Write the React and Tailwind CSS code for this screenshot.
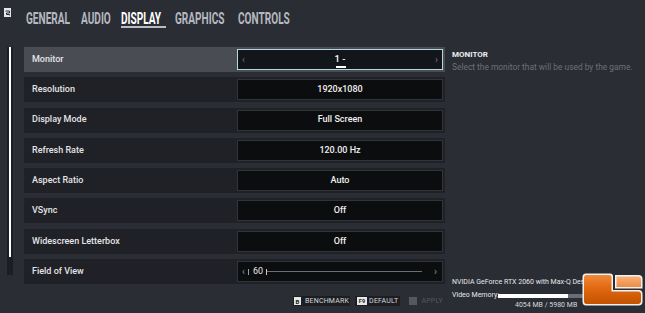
const TABS = [
  { label: 'GENERAL', w: 'w-[46px]' },
  { label: 'AUDIO', w: 'w-[31px]' },
  { label: 'DISPLAY', w: 'w-[45px]', active: true },
  { label: 'GRAPHICS', w: 'w-[54px]' },
  { label: 'CONTROLS', w: 'w-[55px]' },
]

const ROWS = [
  { label: 'Monitor', value: '1 -', active: true },
  { label: 'Resolution', value: '1920x1080' },
  { label: 'Display Mode', value: 'Full Screen' },
  { label: 'Refresh Rate', value: '120.00 Hz' },
  { label: 'Aspect Ratio', value: 'Auto' },
  { label: 'VSync', value: 'Off' },
  { label: 'Widescreen Letterbox', value: 'Off' },
  { label: 'Field of View', slider: 60 },
]

function Logo() {
  return (
    <svg width="61" height="33" viewBox="0 0 61 33" className="absolute left-[582px] top-[273px]">
      <defs>
        <linearGradient id="lr-dark" x1="0" y1="0" x2="0" y2="1">
          <stop offset="0" stopColor="#f08a3a" />
          <stop offset="0.45" stopColor="#e06810" />
          <stop offset="1" stopColor="#c45200" />
        </linearGradient>
        <linearGradient id="lr-light" x1="0" y1="0" x2="0" y2="1">
          <stop offset="0" stopColor="#f8b27a" />
          <stop offset="1" stopColor="#ee8c44" />
        </linearGradient>
      </defs>
      <path d="M4 0.5 H28 Q31 0.5 31 3.5 V17 H56.5 Q60.5 17 60.5 21 V28.5 Q60.5 32.5 56.5 32.5 H4 Q0.5 32.5 0.5 28.5 V4 Q0.5 0.5 4 0.5 Z" fill="#f2f2f2" />
      <path d="M4 2 H27.5 Q29.5 2 29.5 4 V18.5 H56 Q59 18.5 59 21.5 V28 Q59 31 56 31 H4.5 Q2 31 2 28 V4.5 Q2 2 4 2 Z" fill="url(#lr-dark)" />
      <path d="M33 2 H56.5 Q60.5 2 60.5 6 V15.5 H33 Z" fill="#f2f2f2" />
      <path d="M34.5 3.5 H56 Q59 3.5 59 6.5 V14 H34.5 Z" fill="url(#lr-light)" />
    </svg>
  )
}

function Value({ row }) {
  if (row.slider != null) {
    return (
      <div className="flex h-full items-center px-[4px] text-[9px] text-[#8a8e96]">
        <span className="text-[10px] leading-none">‹</span>
        <span className="ml-[3px] h-[6px] w-px bg-[#9a9ea6]" />
        <span className="ml-[4px] text-[#e8e8e8]">{row.slider}</span>
        <span className="ml-[3px] h-[6px] w-px bg-[#c8ccd2]" />
        <span className="h-px w-[155px] bg-[#6a6e76]" />
        <span className="ml-auto mr-[1px] text-[10px] leading-none">›</span>
      </div>
    )
  }
  if (row.active) {
    return (
      <div className="relative flex h-full items-center px-[4px] text-[#6e737b]">
        <span className="text-[10px] leading-none">‹</span>
        <span className="flex-1 text-center text-[9.5px] font-medium text-white">{row.value}</span>
        <span className="text-[10px] leading-none">›</span>
        <span className="absolute bottom-[1px] left-[98px] h-[2px] w-[10px] bg-white" />
      </div>
    )
  }
  return (
    <div className="flex h-full items-center justify-center text-[9px] font-medium text-[#f0f0f0]">{row.value}</div>
  )
}

export default function App() {
  return (
    <div className="relative h-[313px] w-[645px] overflow-hidden bg-[#2a2d34] font-['Roboto',sans-serif]">
      {/* Tabs */}
      <div className="flex h-[32px] items-start pl-[4px] pt-[7px]">
        <div className="mt-[1px] flex h-[9px] w-[7px] items-center justify-center bg-[#e8e8ea]">
          <svg width="5" height="6" viewBox="0 0 5 6">
            <path d="M0.5 1 H4.5 V3 H1.5 V4.5 H4.5 V5.5" fill="none" stroke="#2a2d34" strokeWidth="1" />
          </svg>
        </div>
        <div className="ml-[15px] flex gap-[9px]">
          {TABS.map((t) => (
            <div key={t.label} className={`relative h-[21px] ${t.w}`}>
              <span
                className={`inline-block origin-left scale-x-[0.63] whitespace-nowrap text-[16px] font-bold leading-[13px] ${t.active ? 'text-white' : 'text-[#b6b9c1]'}`}
              >
                {t.label}
              </span>
              {t.active && <span className="absolute left-0 top-[19px] h-[2px] w-[45px] bg-[#b8bcc4]" />}
            </div>
          ))}
        </div>
      </div>

      <div className="flex pt-[15px]">
        {/* Left: scrollbar + rows + buttons */}
        <div className="flex flex-col">
          <div className="flex">
            <div className="ml-[7px] mr-[11px] flex h-[228px] w-[6px] justify-center bg-[#1c1e23]">
              <div className="h-[210px] w-[2px] bg-white" />
            </div>
            <div className="flex w-[421px] flex-col gap-[5.3px]">
              {ROWS.map((r) => (
                <div key={r.label} className={`flex h-[25px] items-center ${r.active ? 'bg-[#4a4c53]' : 'bg-[#1f2126]'}`}>
                  <div className="w-[213px] pl-[8px] text-[9px] font-medium text-[#e4e5e8]">{r.label}</div>
                  <div
                    className={`h-[21px] w-[206px] ${r.active ? 'border-[1.5px] border-[#b4d6e2] bg-[#121519]' : 'border border-[#30343a] bg-[#0c0d0f]'}`}
                  >
                    <Value row={r} />
                  </div>
                </div>
              ))}
            </div>
          </div>
          <div className="mt-[12px] flex items-center justify-end gap-[5px] pr-[2px] text-[7px] tracking-[0.2px]">
            <div className="flex h-[10px] items-center gap-[4px] bg-[#1c1e22] px-[1px]">
              <span className="flex h-[8px] w-[7px] items-center justify-center bg-[#e6e6e6] text-[6px] font-bold text-[#1c1e22]">B</span>
              <span className="text-[#d6d8dc]">BENCHMARK</span>
            </div>
            <div className="flex h-[10px] items-center gap-[2px] bg-[#1c1e22] px-[2px]">
              <span className="flex h-[8px] w-[10px] items-center justify-center bg-[#e6e6e6] text-[5.5px] font-bold text-[#1c1e22]">F9</span>
              <span className="text-[#d6d8dc]">DEFAULT</span>
            </div>
            <div className="ml-[4px] flex h-[10px] items-center gap-[4px]">
              <span className="h-[8px] w-[8px] bg-[#55585f]" />
              <span className="text-[#55585f]">APPLY</span>
            </div>
          </div>
        </div>

        {/* Right info */}
        <div className="ml-[7px] flex flex-1 flex-col">
          <div className="pt-[3px] text-[8px] font-bold leading-[10px] text-[#eceef0]">MONITOR</div>
          <div className="mt-[2px] whitespace-nowrap text-[8.4px] leading-[10px] text-[#6c7078]">
            Select the monitor that will be used by the game.
          </div>
          <div className="mt-[206px] whitespace-nowrap text-[7px] leading-[9px] text-[#e6e7ea]">
            NVIDIA GeForce RTX 2060 with Max-Q Design
          </div>
          <div className="mt-[4px] flex items-center whitespace-nowrap text-[7px] leading-[9px] text-[#e6e7ea]">
            <span className="w-[46px] shrink-0">Video Memory:</span>
            <span className="h-[4px] w-[70px] shrink-0 bg-white" />
            <span className="h-[4px] w-[20px] shrink-0 bg-[#6a6d74]" />
          </div>
          <div className="mt-[1px] whitespace-nowrap pl-[63px] text-[7px] leading-[9px] text-[#d8d9dc]">4054 MB / 5980 MB</div>
        </div>
      </div>

      <Logo />
    </div>
  )
}
